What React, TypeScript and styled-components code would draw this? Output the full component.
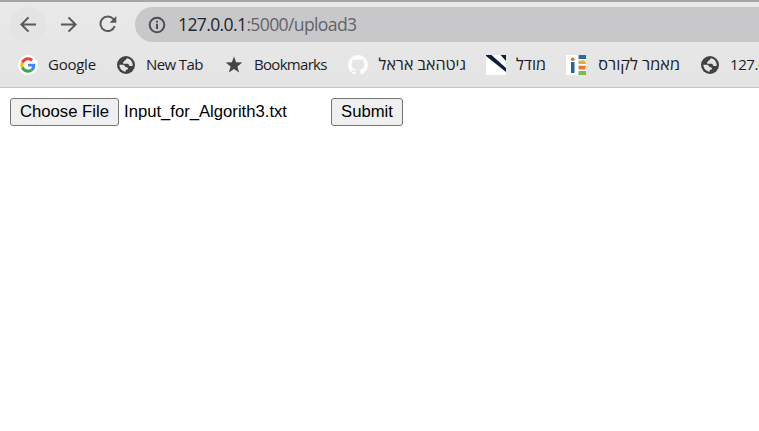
import React from "react";
import styled, { createGlobalStyle } from "styled-components";

const GlobalStyle = createGlobalStyle`
  * { box-sizing: border-box; }
  body { margin: 0; background: #fff; overflow: hidden; }
`;

const Browser = styled.div`
  width: 759px;
  height: 431px;
  overflow: hidden;
  background: #fff;
`;

const Chrome = styled.header`
  height: 88px;
  background: linear-gradient(#e9e9ea, #e4e4e4);
  border-top: 2px solid #a5a5a6;
  border-bottom: 1px solid #c6c6c6;
  overflow: hidden;
`;

const Toolbar = styled.nav`
  display: flex;
  align-items: center;
  height: 45px;
  padding-left: 10px;
`;

const NavButton = styled.button<{ $active?: boolean }>`
  display: flex;
  align-items: center;
  justify-content: center;
  width: 36px;
  height: 36px;
  margin-right: 4px;
  padding: 0 0 1px;
  border: 0;
  border-radius: 50%;
  color: #58595c;
  background: ${(p) => (p.$active ? "#e4e4e5" : "transparent")};
`;

const AddressBar = styled.div`
  display: flex;
  align-items: center;
  flex: 1;
  height: 35px;
  margin-left: 5px;
  padding-left: 13px;
  border-radius: 18px 0 0 18px;
  background: #c8c8ca;
  color: #4c4d50;
`;

const Url = styled.span`
  margin: -1px 0 0 12px;
  font: 17.6px/24px "Open Sans", "Noto Sans", sans-serif;
  letter-spacing: -0.65px;
  color: #626366;
  white-space: nowrap;
`;

const Host = styled.span`
  color: #242528;
`;

const BookmarkBar = styled.div`
  display: flex;
  align-items: center;
  gap: 20px;
  height: 35px;
  padding-left: 18px;
`;

const Bookmark = styled.a`
  display: flex;
  flex: none;
  align-items: center;
  gap: 10px;
  color: #1d1d1f;
  svg { flex: none; }
`;

const Label = styled.span<{ $width: number; $spacing?: number; $size?: number }>`
  width: ${(p) => p.$width}px;
  margin-top: -2px;
  font: ${(p) => p.$size ?? 15}px/22px "Open Sans", "Noto Sans", "DejaVu Sans", sans-serif;
  letter-spacing: ${(p) => p.$spacing ?? 0}px;
  white-space: nowrap;
`;

const Tail = styled.span`
  color: #d89018;
`;

const Page = styled.form`
  display: flex;
  align-items: center;
  padding: 10px;
  font: 16.67px/20px "Liberation Sans", Arial, sans-serif;
  color: #000;
`;

const FormButton = styled.button<{ $width: number }>`
  width: ${(p) => p.$width}px;
  height: 28px;
  padding: 0 0 1px;
  border: 1px solid #767676;
  border-radius: 3px;
  background: #efefef;
  color: #000;
  font: inherit;
  white-space: nowrap;
`;

const FileName = styled.span`
  width: 207px;
  margin-left: 5px;
  padding-bottom: 1px;
`;

const Arrow = ({ forward = false }: { forward?: boolean }) => (
  <svg width="17" height="17" viewBox="0 0 18 18" fill="none" stroke="currentColor" strokeWidth="2.1">
    <path d={forward ? "M1 9H16M9 1.5L16.5 9L9 16.5" : "M17 9H2M9 1.5L1.5 9L9 16.5"} />
  </svg>
);

const Reload = () => (
  <svg width="18" height="18" viewBox="0 0 18 18">
    <path d="M15.7 11.2A7.3 7.3 0 1 1 14.3 3.9L16 5.6" fill="none" stroke="currentColor" strokeWidth="2" />
    <path d="M17.3 1V7.8H10.5Z" fill="currentColor" />
  </svg>
);

const Info = () => (
  <svg width="18" height="18" viewBox="0 0 18 18">
    <circle cx="9" cy="9" r="7.3" fill="none" stroke="currentColor" strokeWidth="2" />
    <path d="M8 7.8H10V13H8ZM8 4.8H10V6.6H8Z" fill="currentColor" />
  </svg>
);

const Google = () => (
  <svg width="20" height="20" viewBox="0 0 20 20">
    <circle cx="10" cy="10" r="10" fill="#fff" />
    <g transform="translate(2.3 2.3) scale(.32)">
      <path fill="#EA4335" d="M24 9.5c3.54 0 6.71 1.22 9.21 3.6l6.85-6.85C35.9 2.38 30.47 0 24 0 14.62 0 6.51 5.38 2.56 13.22l7.98 6.19C12.43 13.72 17.74 9.5 24 9.5z" />
      <path fill="#4285F4" d="M46.98 24.55c0-1.57-.15-3.09-.38-4.55H24v9.02h12.94c-.58 2.96-2.26 5.48-4.78 7.18l7.73 6c4.51-4.18 7.09-10.36 7.09-17.65z" />
      <path fill="#FBBC05" d="M10.53 28.59A14.5 14.5 0 0 1 9.77 24c0-1.6.27-3.14.76-4.59l-7.98-6.19A24 24 0 0 0 0 24c0 3.88.92 7.54 2.56 10.78z" />
      <path fill="#34A853" d="M24 48c6.48 0 11.93-2.13 15.89-5.81l-7.73-6c-2.15 1.45-4.92 2.3-8.16 2.3-6.26 0-11.57-4.22-13.47-9.91l-7.98 6.19C6.51 42.62 14.62 48 24 48z" />
    </g>
  </svg>
);

const Globe = () => (
  <svg width="20" height="20" viewBox="0 0 20 20">
    <circle cx="10" cy="10" r="9" fill="#424244" />
    <path d="M11.5 3.2C10.2 3.4 10.4 4.6 9.2 5.2C7.8 5.7 8.3 6.9 7.1 7.4C6.7 7.7 7 8.7 8.1 8.7H11.2C13.5 8.7 12.4 11 14.4 11.1H16.6C17.2 8 15.2 4.2 11.5 3.2Z" fill="#e4e4e4" />
    <path d="M3.4 9.8C3.4 13.4 6.2 16.5 9.7 16.8V15.1C11.3 15.1 12.2 14.3 12.1 13.1C11.8 12.2 10.7 12.4 9.8 12.2C8.7 11.8 9 9.8 7 9.8Z" fill="#e4e4e4" />
  </svg>
);

const Star = () => (
  <svg width="20" height="20" viewBox="0 0 20 20">
    <path fill="#454547" d="M10 1.6L12.1 7.3L18.3 7.6L13.4 11.4L15.1 17.4L10 14L4.9 17.4L6.6 11.4L1.7 7.6L7.9 7.3Z" />
  </svg>
);

const GitHub = () => (
  <svg width="20" height="20" viewBox="0 0 16 16">
    <path fill="#fcfcfc" d="M8 0C3.58 0 0 3.58 0 8c0 3.54 2.29 6.53 5.47 7.59.4.07.55-.17.55-.38v-1.49c-2.23.48-2.69-.95-2.69-.95-.36-.92-.89-1.17-.89-1.17-.73-.5.05-.49.05-.49.81.06 1.23.83 1.23.83.72 1.23 1.88.88 2.34.67.07-.52.28-.87.5-1.07-1.78-.2-3.64-.89-3.64-3.95 0-.87.31-1.59.82-2.15-.08-.2-.36-1.01.08-2.12 0 0 .67-.21 2.2.82A7.6 7.6 0 0 1 8 3.87c.68 0 1.36.09 2 .27 1.53-1.04 2.2-.82 2.2-.82.44 1.11.16 1.92.08 2.12.51.56.82 1.27.82 2.15 0 3.07-1.87 3.75-3.65 3.95.29.25.54.73.54 1.48v2.19c0 .21.15.46.55.38A8 8 0 0 0 8 0z" />
  </svg>
);

const Moodle = () => (
  <svg width="20" height="20" viewBox="0 0 20 20">
    <path d="M0 0H20V20H0Z" fill="#fff" />
    <path d="M0 0H5.5L20 13V17L0 1ZM14.5 0H20V6Z" fill="#111d3d" />
  </svg>
);

const Course = () => (
  <svg width="20" height="20" viewBox="0 0 20 20">
    <path d="M0 0H20V20H0Z" fill="#fff" />
    <path d="M5 7H8.5V18H5Z" fill="#236798" />
    <circle cx="6.7" cy="4.2" r="1.8" fill="#d46c32" />
    <path d="M12.5 0H20V4H12.5Z" fill="#286d9c" />
    <path d="M12.5 5.5H19L20 9H12.5Z" fill="#e7ac38" />
    <path d="M12.5 10.7H20L19 14.4H12.5Z" fill="#e27832" />
    <path d="M12.5 16H20V20H12.5Z" fill="#81b946" />
  </svg>
);

export default function App() {
  return (
    <Browser>
      <GlobalStyle />
      <Chrome>
        <Toolbar>
          <NavButton $active aria-label="Back"><Arrow /></NavButton>
          <NavButton aria-label="Forward"><Arrow forward /></NavButton>
          <NavButton aria-label="Reload"><Reload /></NavButton>
          <AddressBar><Info /><Url><Host>127.0.0.1</Host>:5000/upload3</Url></AddressBar>
        </Toolbar>
        <BookmarkBar>
          <Bookmark><Google /><Label $width={48} $spacing={-0.25}>Google</Label></Bookmark>
          <Bookmark><Globe /><Label $width={58} $spacing={-0.6}>New Tab</Label></Bookmark>
          <Bookmark><Star /><Label $width={74} $spacing={-0.7}>Bookmarks</Label></Bookmark>
          <Bookmark><GitHub /><Label $width={88} $size={16.1} dir="rtl">גיטהאב אראל</Label></Bookmark>
          <Bookmark><Moodle /><Label $width={30} $size={16.1} dir="rtl">מודל</Label></Bookmark>
          <Bookmark><Course /><Label $width={84} $size={16.3} dir="rtl">מאמר לקורס</Label></Bookmark>
          <Bookmark><Globe /><Label $width={40} $spacing={-0.4}>127.<Tail>0</Tail></Label></Bookmark>
        </BookmarkBar>
      </Chrome>
      <Page onSubmit={(e) => e.preventDefault()}>
        <FormButton type="button" $width={109}>Choose File</FormButton>
        <FileName>Input_for_Algorith3.txt</FileName>
        <FormButton type="submit" $width={72}>Submit</FormButton>
      </Page>
    </Browser>
  );
}
